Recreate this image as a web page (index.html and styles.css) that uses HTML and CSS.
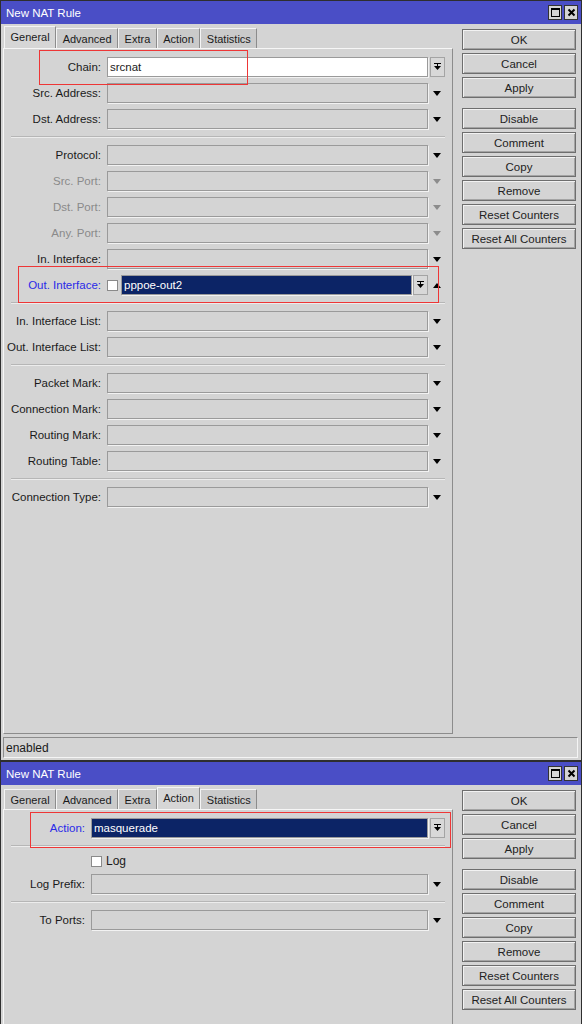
FILE: index.html
```html
<!DOCTYPE html>
<html>
<head>
<meta charset="utf-8">
<title>New NAT Rule</title>
<link rel="stylesheet" href="styles.css">
</head>
<body>
<div class="window w1">
  <div class="titlebar">
    <span class="title">New NAT Rule</span>
    <div class="tb-btns">
      <span class="tb-btn"><svg width="9" height="9" viewBox="0 0 9 9"><rect x="0.5" y="0.5" width="8" height="8" fill="none" stroke="#000"/><rect x="0" y="0" width="9" height="2" fill="#000"/></svg></span>
      <span class="tb-btn"><svg width="9" height="9" viewBox="0 0 9 9"><path d="M1.5 1.5 L7.5 7.5 M7.5 1.5 L1.5 7.5" stroke="#000" stroke-width="2"/></svg></span>
    </div>
  </div>
  <div class="body">
    <div class="main">
      <div class="left">
        <div class="tabs">
          <div class="tab active">General</div>
          <div class="tab">Advanced</div>
          <div class="tab">Extra</div>
          <div class="tab">Action</div>
          <div class="tab">Statistics</div>
        </div>
        <div class="panel">
          <div class="row"><span class="lbl">Chain:</span><div class="field white">srcnat</div><span class="ddbtn"><svg width="7" height="8" viewBox="0 0 7 8"><rect x="0" y="0" width="7" height="1" fill="#000"/><rect x="3" y="1" width="1" height="3" fill="#000"/><polygon points="0,3 7,3 3.5,7" fill="#000"/></svg></span></div>
          <div class="row"><span class="lbl">Src. Address:</span><div class="field"></div><span class="arrow"></span></div>
          <div class="row"><span class="lbl">Dst. Address:</span><div class="field"></div><span class="arrow"></span></div>
          <div class="sep"></div>
          <div class="row"><span class="lbl">Protocol:</span><div class="field"></div><span class="arrow"></span></div>
          <div class="row"><span class="lbl dis">Src. Port:</span><div class="field"></div><span class="arrow dis"></span></div>
          <div class="row"><span class="lbl dis">Dst. Port:</span><div class="field"></div><span class="arrow dis"></span></div>
          <div class="row"><span class="lbl dis">Any. Port:</span><div class="field"></div><span class="arrow dis"></span></div>
          <div class="row"><span class="lbl">In. Interface:</span><div class="field"></div><span class="arrow"></span></div>
          <div class="row"><span class="lbl blue">Out. Interface:</span>
            <div class="combo"><span class="cb"></span><div class="field sel">pppoe-out2</div><span class="ddbtn inner"><svg width="7" height="8" viewBox="0 0 7 8"><rect x="0" y="0" width="7" height="1" fill="#000"/><rect x="3" y="1" width="1" height="3" fill="#000"/><polygon points="0,3 7,3 3.5,7" fill="#000"/></svg></span></div>
            <span class="arrow up"></span></div>
          <div class="sep"></div>
          <div class="row"><span class="lbl">In. Interface List:</span><div class="field"></div><span class="arrow"></span></div>
          <div class="row"><span class="lbl">Out. Interface List:</span><div class="field"></div><span class="arrow"></span></div>
          <div class="sep"></div>
          <div class="row"><span class="lbl">Packet Mark:</span><div class="field"></div><span class="arrow"></span></div>
          <div class="row"><span class="lbl">Connection Mark:</span><div class="field"></div><span class="arrow"></span></div>
          <div class="row"><span class="lbl">Routing Mark:</span><div class="field"></div><span class="arrow"></span></div>
          <div class="row"><span class="lbl">Routing Table:</span><div class="field"></div><span class="arrow"></span></div>
          <div class="sep"></div>
          <div class="row"><span class="lbl">Connection Type:</span><div class="field"></div><span class="arrow"></span></div>
        </div>
      </div>
      <div class="buttons">
        <div class="btn">OK</div>
        <div class="btn">Cancel</div>
        <div class="btn">Apply</div>
        <div class="btn gap">Disable</div>
        <div class="btn">Comment</div>
        <div class="btn">Copy</div>
        <div class="btn">Remove</div>
        <div class="btn">Reset Counters</div>
        <div class="btn">Reset All Counters</div>
      </div>
    </div>
    <div class="status">enabled</div>
  </div>
  <div class="mark mark-chain"></div>
  <div class="mark mark-out"></div>
</div>

<div class="window w2">
  <div class="titlebar">
    <span class="title">New NAT Rule</span>
    <div class="tb-btns">
      <span class="tb-btn"><svg width="9" height="9" viewBox="0 0 9 9"><rect x="0.5" y="0.5" width="8" height="8" fill="none" stroke="#000"/><rect x="0" y="0" width="9" height="2" fill="#000"/></svg></span>
      <span class="tb-btn"><svg width="9" height="9" viewBox="0 0 9 9"><path d="M1.5 1.5 L7.5 7.5 M7.5 1.5 L1.5 7.5" stroke="#000" stroke-width="2"/></svg></span>
    </div>
  </div>
  <div class="body">
    <div class="main">
      <div class="left">
        <div class="tabs">
          <div class="tab">General</div>
          <div class="tab">Advanced</div>
          <div class="tab">Extra</div>
          <div class="tab active">Action</div>
          <div class="tab">Statistics</div>
        </div>
        <div class="panel">
          <div class="row"><span class="lbl blue">Action:</span><div class="field sel">masquerade</div><span class="ddbtn"><svg width="7" height="8" viewBox="0 0 7 8"><rect x="0" y="0" width="7" height="1" fill="#000"/><rect x="3" y="1" width="1" height="3" fill="#000"/><polygon points="0,3 7,3 3.5,7" fill="#000"/></svg></span></div>
          <div class="sep"></div>
          <div class="row check"><span class="lbl"></span><span class="cb"></span><span class="cb-text">Log</span></div>
          <div class="row"><span class="lbl">Log Prefix:</span><div class="field"></div><span class="arrow"></span></div>
          <div class="sep"></div>
          <div class="row"><span class="lbl">To Ports:</span><div class="field"></div><span class="arrow"></span></div>
        </div>
      </div>
      <div class="buttons">
        <div class="btn">OK</div>
        <div class="btn">Cancel</div>
        <div class="btn">Apply</div>
        <div class="btn gap">Disable</div>
        <div class="btn">Comment</div>
        <div class="btn">Copy</div>
        <div class="btn">Remove</div>
        <div class="btn">Reset Counters</div>
        <div class="btn">Reset All Counters</div>
      </div>
    </div>
  </div>
  <div class="mark mark-action"></div>
</div>
</body>
</html>
```

FILE: styles.css
```css
body {
  margin: 0;
  background: #d4d4d4;
  font-family: "Liberation Sans", Arial, sans-serif;
  font-size: 11.5px;
  color: #1a1a1a;
}

.window {
  position: relative;
  width: 582px;
  box-sizing: border-box;
  border: 1px solid #2e2e2e;
  background: #d4d4d4;
  display: flex;
  flex-direction: column;
  overflow: hidden;
}

.w1 { height: 761px; }
.w2 { height: 280px; border-bottom: none; }

.titlebar {
  height: 23px;
  flex: none;
  background: #4a4ec6;
  color: #fff;
  display: flex;
  align-items: center;
  justify-content: space-between;
  padding: 0 3px 0 5px;
}

.title { font-size: 11.5px; }

.tb-btns { display: flex; gap: 2px; }

.tb-btn {
  width: 14px;
  height: 15px;
  box-sizing: border-box;
  background: #d4d4d4;
  border: 1px solid #333;
  display: flex;
  align-items: center;
  justify-content: center;
}

.body {
  flex: 1;
  min-height: 0;
  display: flex;
  flex-direction: column;
  padding: 2px 3px 2px 2px;
}

.main { flex: 1; min-height: 0; display: flex; }

.left { width: 450px; display: flex; flex-direction: column; }

.tabs {
  height: 22px;
  flex: none;
  display: flex;
  align-items: flex-end;
  padding-left: 1px;
}

.tab {
  height: 20px;
  box-sizing: border-box;
  padding: 0 5.5px;
  font-size: 11px;
  border: 1px solid;
  border-color: #f4f4f4 #8c8c8c transparent #f4f4f4;
  border-bottom: none;
  background: #cacaca;
  display: flex;
  align-items: center;
}

.tab.active {
  height: 22px;
  background: #d6d6d6;
  padding-bottom: 2px;
}

.panel {
  flex: 1;
  min-height: 0;
  border: 1px solid;
  border-color: #f6f6f6 #8c8c8c #8c8c8c #f6f6f6;
  padding: 8px 7px 0 0;
  display: flex;
  flex-direction: column;
  gap: 6px;
  background: #d4d4d4;
}

.row {
  display: flex;
  align-items: center;
  height: 20px;
  flex: none;
}

.row.check { height: 14px; }

.lbl {
  width: 97px;
  flex: none;
  margin-right: 6px;
  text-align: right;
  white-space: nowrap;
}

.w2 .lbl { width: 81px; }

.lbl.dis { color: #8a8a8a; }
.lbl.blue { color: #2a2ae8; }

.field {
  flex: 1;
  min-width: 0;
  height: 20px;
  box-sizing: border-box;
  border: 1px solid #9a9a9a;
  box-shadow: 1px 1px 0 #f2f2f2;
  padding-left: 2px;
  display: flex;
  align-items: center;
  white-space: nowrap;
}

.field.white { background: #fff; }
.field.sel { background: #0c2466; color: #fff; }

.arrow {
  width: 16px;
  height: 20px;
  flex: none;
  margin-left: 1px;
  display: flex;
  align-items: center;
  justify-content: center;
}

.arrow::after {
  content: "";
  border-left: 4px solid transparent;
  border-right: 4px solid transparent;
  border-top: 5px solid #000;
}

.arrow.dis::after { border-top-color: #8c8c8c; }

.arrow.up::after {
  border-top: none;
  border-bottom: 5px solid #000;
}

.ddbtn {
  width: 15px;
  height: 20px;
  flex: none;
  margin-left: 2px;
  box-sizing: border-box;
  border: 1px solid #a4a4a4;
  background: #d8d8d8;
  display: flex;
  align-items: center;
  justify-content: center;
}

.ddbtn.inner { margin-left: 1px; }

.combo {
  flex: 1;
  min-width: 0;
  display: flex;
  align-items: center;
  height: 20px;
}

.cb {
  width: 11px;
  height: 11px;
  flex: none;
  box-sizing: border-box;
  background: #fff;
  border: 1px solid #8a8a8a;
  margin-right: 3px;
}

.cb-text { margin-left: 1px; font-size: 12px; }

.sep {
  flex: none;
  height: 0;
  border-top: 1px solid #b6b6b6;
  border-bottom: 1px solid #ececec;
  margin: 1px 0 1px 7px;
}

.buttons {
  width: 114px;
  flex: none;
  margin-left: 9px;
  margin-right: 2px;
  padding-top: 3px;
  display: flex;
  flex-direction: column;
  gap: 3px;
}

.btn {
  height: 21px;
  box-sizing: border-box;
  border: 1px solid #6e6e6e;
  box-shadow: inset 1px 1px 0 #f2f2f2, inset -1px -1px 0 #a4a4a4;
  display: flex;
  align-items: center;
  justify-content: center;
  color: #222;
  white-space: nowrap;
}

.btn.gap { margin-top: 7px; }

.status {
  height: 21px;
  flex: none;
  margin-top: 3px;
  box-sizing: border-box;
  border: 1px solid;
  border-color: #8c8c8c #f4f4f4 #f4f4f4 #8c8c8c;
  padding-left: 2px;
  display: flex;
  align-items: center;
  font-size: 12px;
}

.mark {
  position: absolute;
  border: 1px solid #ee3636;
  box-sizing: border-box;
  pointer-events: none;
}

.mark-chain { left: 38px; top: 49px; width: 209px; height: 35px; }
.mark-out { left: 17px; top: 265px; width: 421px; height: 37px; }
.mark-action { left: 29px; top: 50px; width: 421px; height: 36px; }
```
